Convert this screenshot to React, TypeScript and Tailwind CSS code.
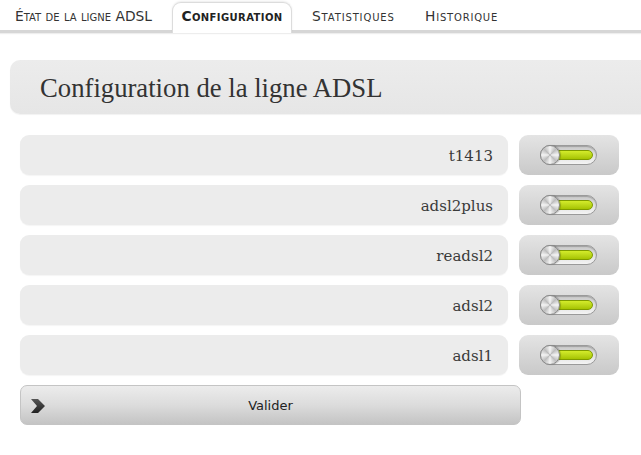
import React from "react";

const rows = ["t1413", "adsl2plus", "readsl2", "adsl2", "adsl1"];

function Toggle() {
  return (
    <div className="relative h-[20px] w-[57px] rounded-full border border-[#9a9a9a] bg-gradient-to-b from-[#c8c8c8] to-[#f4f4f4] shadow-[inset_0_1px_1px_rgba(0,0,0,0.2)]">
      <div className="absolute left-[14px] right-[3px] top-[4px] h-[10px] rounded-full border border-[#7f9a00] bg-gradient-to-b from-[#d4ec2a] to-[#a6c400]" />
      <div className="absolute left-[-1px] top-[-1px] h-[20px] w-[20px] rounded-full border border-[#8a8a8a] bg-[conic-gradient(from_0deg,#f4f4f4,#bdbdbd,#f4f4f4,#bdbdbd,#f4f4f4,#bdbdbd,#f4f4f4,#bdbdbd,#f4f4f4)] shadow-[1px_0_1px_rgba(0,0,0,0.25)]" />
    </div>
  );
}

export default function App() {
  const tabFont = { fontFamily: '"DejaVu Sans", Verdana, sans-serif' };
  return (
    <div className="h-[455px] w-[641px] bg-white overflow-hidden">
      {/* tab bar */}
      <div className="relative h-[33px] border-b-[3px] border-[#d6d6d6] shadow-[0_1px_1px_#eeeeee]">
        <div
          className="flex h-full items-end text-[13.8px] text-[#333] [font-variant:small-caps]"
          style={tabFont}
        >
          <div className="ml-[15px] flex h-[28px] w-[157px] items-center pt-[1px]">État de la ligne ADSL</div>
          <div className="relative mb-[-3px] flex h-[31px] w-[120px] items-center justify-center rounded-t-[9px] border border-b-0 border-[#dcdcdc] bg-white pb-[3px] font-bold tracking-[0.4px] text-[#222] shadow-[0_-1px_2px_rgba(0,0,0,0.08)]">
            Configuration
          </div>
          <div className="ml-[20px] flex h-[28px] w-[113px] items-center pt-[1px] tracking-[0.85px]">Statistiques</div>
          <div className="flex h-[28px] items-center pt-[1px] tracking-[0.8px]">Historique</div>
        </div>
      </div>

      {/* header */}
      <div className="ml-[10px] mt-[27px] flex h-[54px] items-center rounded-l-[10px] bg-gradient-to-b from-[#ececec] to-[#e6e6e6] pl-[30px] shadow-[0_1px_1px_#f2f2f2]">
        <h1
          className="text-[26.7px] leading-none text-[#333] pt-[3px]"
          style={{ fontFamily: '"Liberation Serif", "Times New Roman", serif' }}
        >
          Configuration de la ligne ADSL
        </h1>
      </div>

      {/* rows */}
      <div className="ml-[20px] mt-[21px] flex flex-col gap-[10px]">
        {rows.map((r) => (
          <div key={r} className="flex gap-[11px]">
            <div
              className="flex h-[40px] w-[488px] items-center justify-end rounded-[9px] bg-[#ececec] pr-[15px] pt-[2px] text-[15px] text-[#3a3a3a] shadow-[0_1px_1px_#f5f5f5]"
              style={{ fontFamily: '"DejaVu Serif", Georgia, serif' }}
            >
              {r}
            </div>
            <div className="flex h-[40px] w-[100px] items-center justify-start rounded-[9px] bg-gradient-to-b from-[#e4e4e4] to-[#c9c9c9] pl-[21px]">
              <Toggle />
            </div>
          </div>
        ))}
        <button
          className="relative flex h-[40px] w-[501px] items-center justify-center rounded-[7px] border border-[#c4c4c4] bg-gradient-to-b from-[#ececec] via-[#dcdcdc] to-[#c4c4c4] text-[13px] text-[#222]"
          style={{ fontFamily: '"DejaVu Sans", Verdana, sans-serif' }}
        >
          <svg className="absolute left-[9px] top-[12px]" width="16" height="16" viewBox="0 0 16 16">
            <defs>
              <linearGradient id="chev" x1="0" y1="0" x2="0" y2="1">
                <stop offset="0" stopColor="#555" />
                <stop offset="1" stopColor="#222" />
              </linearGradient>
            </defs>
            <polygon points="1,1 8,1 15,8 8,15 1,15 7,8" fill="url(#chev)" />
          </svg>
          <span className="pt-[1px]">Valider</span>
        </button>
      </div>
    </div>
  );
}
